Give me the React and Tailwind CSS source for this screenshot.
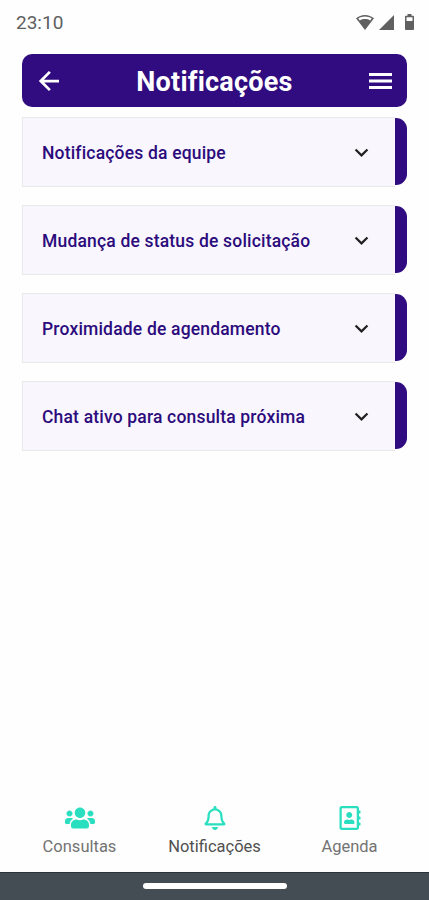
import { FaRegAddressBook, FaRegBell, FaUsers } from "react-icons/fa";
import { MdKeyboardArrowDown } from "react-icons/md";

const sections = [
  { id: "team", title: "Notificações da equipe" },
  { id: "status", title: "Mudança de status de solicitação" },
  { id: "upcoming", title: "Proximidade de agendamento" },
  { id: "chat", title: "Chat ativo para consulta próxima" },
];

export default function App() {
  return (
    <div className="flex h-screen w-full flex-col overflow-hidden bg-[#fefefe] font-['Roboto',sans-serif]">
      <StatusBar />

      {/* Header */}
      <header className="mx-[22px] mt-[10px] flex h-[53px] shrink-0 items-center justify-between rounded-[10px] bg-[#300c80] px-[12px] text-white">
        <button aria-label="Voltar" className="w-[30px]">
          <svg width="30" height="30" viewBox="0 0 24 24" fill="none" stroke="currentColor" strokeWidth="2.2">
            <path d="M20 12H5.500M12.700 4.700 5.400 12l7.300 7.300" />
          </svg>
        </button>
        <h1 className="pt-[4px] text-[27px] leading-none font-bold tracking-[0.22px]">Notificações</h1>
        <button aria-label="Menu" className="flex w-[30px] justify-center pl-[2px]">
          <svg width="23" height="16" viewBox="0 0 23 16" fill="currentColor">
            <path d="M0 0h23v3H0zM0 6.500h23v3H0zM0 13h23v3H0z" />
          </svg>
        </button>
      </header>

      {/* Accordion list */}
      <main className="mx-[22px] mt-[10px] flex flex-1 flex-col gap-[18px]">
        {sections.map((s) => (
          <Section key={s.id} title={s.title} />
        ))}
      </main>

      {/* Tabs */}
      <nav className="flex h-[78px] shrink-0 px-[12px] pt-[11px] text-[#29dfbf]">
        <Tab label="Consultas" icon={<FaUsers size={30} />} />
        <Tab label="Notificações" icon={<FaRegBell size={24} />} active />
        <Tab label="Agenda" icon={<FaRegAddressBook size={24} />} />
      </nav>

      <div className="flex h-[28px] shrink-0 justify-center border-t border-[#28333b] bg-[#444c54] pt-[10px]">
        <div className="h-[6px] w-[144px] rounded-full bg-white" />
      </div>
    </div>
  );
}

function StatusBar() {
  return (
    <div className="flex h-[44px] shrink-0 items-center justify-between pr-[15px] pl-4 text-[#606060]">
      <span className="text-[19px] leading-none">23:10</span>
      <div className="flex items-center">
        <svg width="18" height="15" viewBox="0 0 18 15" fill="currentColor">
          <path d="M9 0C5.500 0 2.400 1.300 0 3.300L9 15l9-11.700C15.600 1.300 12.500 0 9 0Zm0 1.600c2.500 0 4.800.7 6.700 1.900l-1.500 1.900C12.700 4.500 10.900 4 9 4s-3.700.5-5.200 1.400L2.300 3.500C4.200 2.300 6.500 1.600 9 1.600Z" />
        </svg>
        <svg width="15" height="15" viewBox="0 0 15 15" fill="currentColor" className="ml-[5px]">
          <path d="M15 0v15H0Z" />
        </svg>
        <svg width="9" height="16" viewBox="0 0 9 16" fill="currentColor" className="ml-[11px]">
          <path fillRule="evenodd" d="M2.500 0h4v1.700H8c.6 0 1 .4 1 1V15c0 .6-.4 1-1 1H1c-.6 0-1-.4-1-1V2.700c0-.6.4-1 1-1h1.500Zm-1 3.200V7h6V3.200Z" />
        </svg>
      </div>
    </div>
  );
}

function Section({ title }) {
  return (
    <section className="flex h-[70px] shrink-0">
      <button className="flex flex-1 items-center justify-between border border-r-0 border-[#e9e9ed] bg-[#f9f6fd] pr-[20px] pl-[19px] text-left">
        <span className="pt-[3px] text-[17.5px] leading-none font-medium tracking-[0.18px] whitespace-nowrap text-[#2c0b7c]">
          {title}
        </span>
        <MdKeyboardArrowDown size={27} className="text-[#222222]" />
      </button>
      <div className="mt-px mb-[2px] w-[12px] rounded-r-[11px] bg-[#300c80]" />
    </section>
  );
}

function Tab({ label, icon, active }) {
  return (
    <button className="flex flex-1 flex-col items-center">
      <span className="flex h-[26px] items-center">{icon}</span>
      <span className={`mt-[8px] text-[16.5px] leading-none ${active ? "text-[#505050]" : "text-[#737373]"}`}>
        {label}
      </span>
    </button>
  );
}
